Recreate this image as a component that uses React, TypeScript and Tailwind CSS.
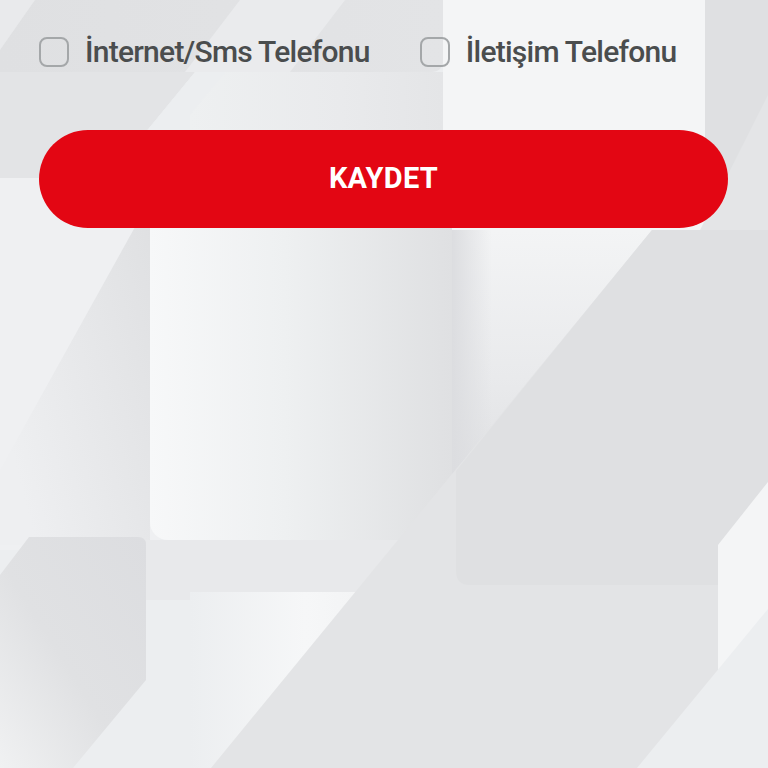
import React from "react";

function Backdrop() {
  return (
    <svg
      className="absolute inset-0 h-full w-full"
      viewBox="0 0 768 768"
      preserveAspectRatio="none"
      aria-hidden="true"
    >
      <defs>
        <linearGradient id="leftShade" x1="1" y1="0" x2="0" y2="0.6">
          <stop offset="0" stopColor="#dfe0e2" />
          <stop offset="1" stopColor="#eeeff1" />
        </linearGradient>
        <linearGradient id="panel" x1="0" y1="0" x2="1" y2="0">
          <stop offset="0" stopColor="#f7f8f9" />
          <stop offset="0.45" stopColor="#eef0f1" />
          <stop offset="1" stopColor="#dfe0e2" />
        </linearGradient>
        <linearGradient id="lowPanel" x1="0" y1="0" x2="1" y2="0">
          <stop offset="0" stopColor="#eceef0" />
          <stop offset="0.7" stopColor="#f6f7f8" />
          <stop offset="1" stopColor="#f3f4f5" />
        </linearGradient>
        <linearGradient id="cornerBlock" x1="1" y1="0" x2="0" y2="1">
          <stop offset="0" stopColor="#dcdde0" />
          <stop offset="0.55" stopColor="#e0e1e3" />
          <stop offset="1" stopColor="#f0f1f2" />
        </linearGradient>
        <linearGradient id="topBlock" x1="0" y1="0" x2="1" y2="0">
          <stop offset="0" stopColor="#dfe0e2" />
          <stop offset="1" stopColor="#e3e4e6" />
        </linearGradient>
        <linearGradient id="upperMid" x1="0" y1="0" x2="1" y2="0">
          <stop offset="0" stopColor="#eef0f1" />
          <stop offset="0.6" stopColor="#e9eaec" />
          <stop offset="1" stopColor="#e4e5e7" />
        </linearGradient>
        <linearGradient id="wedge" x1="0" y1="0" x2="0" y2="1">
          <stop offset="0" stopColor="#f3f4f5" />
          <stop offset="0.6" stopColor="#e9eaec" />
          <stop offset="1" stopColor="#e0e1e3" />
        </linearGradient>
        <linearGradient id="wedgeEdge" x1="0" y1="0" x2="1" y2="0">
          <stop offset="0" stopColor="#dcdde0" />
          <stop offset="1" stopColor="#dcdde0" stopOpacity="0" />
        </linearGradient>
      </defs>

      <rect x="0" y="0" width="768" height="768" fill="#eceef0" />

      {/* upper band */}
      <rect x="190" y="72" width="253" height="170" fill="url(#upperMid)" />
      <polygon points="0,72 195,72 108,178 0,178" fill="#e3e4e6" />
      <polygon points="195,72 225,72 138,178 108,178" fill="#eceef0" />
      <rect x="0" y="178" width="190" height="70" fill="#eff0f2" />
      <path d="M0 0 H443 V60 Q443 72 431 72 H0 Z" fill="url(#topBlock)" />
      <polygon points="240,0 345,0 290,72 185,72" fill="#eaebed" />
      <polygon points="0,0 35,0 0,50" fill="#e9eaec" />
      <rect x="443" y="0" width="262" height="240" fill="#f4f5f6" />
      <rect x="705" y="0" width="63" height="240" fill="#dfe0e2" />
      <polygon points="768,95 768,240 695,240" fill="#e4e5e7" />

      {/* middle and lower */}
      <rect x="0" y="230" width="160" height="320" fill="#eff0f2" />
      <polygon points="150,200 150,545 0,545 0,470" fill="url(#leftShade)" />
      <rect x="150" y="200" width="302" height="340" rx="18" fill="url(#panel)" />
      <rect x="146" y="540" width="320" height="60" fill="#e8e9eb" />
      <rect x="190" y="592" width="165" height="176" fill="url(#lowPanel)" />
      <polygon points="452,230 652,230 452,476" fill="url(#wedge)" />
      <rect x="452" y="230" width="40" height="250" fill="url(#wedgeEdge)" />
      <polygon points="652,230 768,230 768,768 211,768" fill="#e3e4e6" />
      <path
        d="M652 230 H768 V482 L718 545 V585 H470 Q456 585 456 571 V471 Z"
        fill="#dfe0e2"
      />
      <path d="M768 482 V688 H730 Q718 688 718 676 V545 Z" fill="#f4f5f6" />
      <polygon points="768,609 768,768 637,768" fill="#eceef0" />
      <path
        d="M29 537 H138 Q146 537 146 545 V680 L73 768 H0 V575 Z"
        fill="url(#cornerBlock)"
      />
    </svg>
  );
}

function Check({ label }: { label: string }) {
  return (
    <label className="flex items-center gap-[16px]">
      <span className="block h-[30px] w-[30px] shrink-0 rounded-[8px] border-2 border-[#a4a7a9]" />
      <span className="text-[30px] font-medium leading-[30px] tracking-[-0.75px] text-[#4a4d4e]">
        {label}
      </span>
    </label>
  );
}

export default function App() {
  return (
    <div className="relative h-[768px] w-full overflow-hidden bg-[#eceef0] font-[Roboto,sans-serif]">
      <Backdrop />
      <div className="relative flex flex-col px-[39px] pt-[37px] pr-[40px]">
        <div className="flex items-center gap-[50px]">
          <Check label="İnternet/Sms Telefonu" />
          <Check label="İletişim Telefonu" />
        </div>
        <button
          type="button"
          className="mt-[63px] flex h-[98px] w-full items-center justify-center rounded-full bg-[#e30613] text-[29px] font-bold tracking-[0.3px] text-white"
        >
          KAYDET
        </button>
      </div>
    </div>
  );
}
